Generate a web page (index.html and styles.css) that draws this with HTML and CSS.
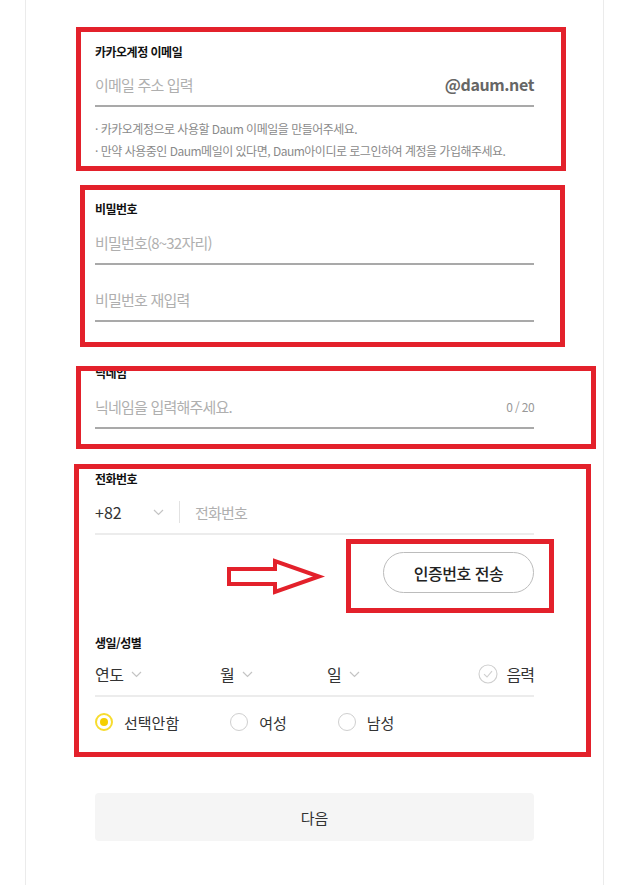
FILE: index.html
```html
<!DOCTYPE html>
<html lang="ko">
<head>
  <meta charset="UTF-8" />
  <meta name="viewport" content="width=device-width, initial-scale=1.0"/>
  <title>카카오계정 가입</title>
  <link rel="stylesheet" href="styles.css">
</head>
<body>

<div class="page">

  <!-- Signup form card -->
  <div class="signup">

    <div class="field">
      <label class="field-label">카카오계정 이메일</label>
      <div class="input-row">
        <input type="text" placeholder="이메일 주소 입력" />
        <span class="domain">@daum.net</span>
      </div>
      <ul class="help">
        <li>카카오계정으로 사용할 Daum 이메일을 만들어주세요.</li>
        <li>만약 사용중인 Daum메일이 있다면, Daum아이디로 로그인하여 계정을 가입해주세요.</li>
      </ul>
    </div>

    <div class="field field-password">
      <label class="field-label">비밀번호</label>
      <div class="input-row">
        <input type="password" placeholder="비밀번호(8~32자리)" />
      </div>
      <div class="input-row input-row-second">
        <input type="password" placeholder="비밀번호 재입력" />
      </div>
    </div>

    <div class="field field-nickname">
      <label class="field-label">닉네임</label>
      <div class="input-row">
        <input type="text" placeholder="닉네임을 입력해주세요." />
        <span class="counter">0 / 20</span>
      </div>
    </div>

    <div class="field field-phone">
      <label class="field-label">전화번호</label>
      <div class="input-row input-row-light">
        <div class="country">
          <span>+82</span>
          <svg class="chevron" width="11" height="7" viewBox="0 0 11 7"><polyline points="1,1 5.5,5.5 10,1" /></svg>
        </div>
        <span class="divider"></span>
        <input type="tel" placeholder="전화번호" />
      </div>
      <div class="send-wrap">
        <button class="send-btn">인증번호 전송</button>
      </div>
    </div>

    <div class="field field-birth">
      <label class="field-label">생일/성별</label>
      <div class="input-row input-row-light birth-row">
        <div class="pick pick-year">연도 <svg class="chevron" width="11" height="7" viewBox="0 0 11 7"><polyline points="1,1 5.5,5.5 10,1" /></svg></div>
        <div class="pick pick-month">월 <svg class="chevron" width="11" height="7" viewBox="0 0 11 7"><polyline points="1,1 5.5,5.5 10,1" /></svg></div>
        <div class="pick pick-day">일 <svg class="chevron" width="11" height="7" viewBox="0 0 11 7"><polyline points="1,1 5.5,5.5 10,1" /></svg></div>
        <div class="lunar">
          <svg class="check" width="20" height="20" viewBox="0 0 20 20">
            <circle cx="10" cy="10" r="9" />
            <polyline points="6,10.2 9,13 14,7.2" />
          </svg>
          <span>음력</span>
        </div>
      </div>
      <div class="gender">
        <label class="radio radio-on"><span class="dot"></span>선택안함</label>
        <label class="radio"><span class="dot"></span>여성</label>
        <label class="radio"><span class="dot"></span>남성</label>
      </div>
    </div>

    <button class="next-btn">다음</button>
  </div>

  <!-- Red annotation marks drawn over the screenshot -->
  <div class="mark mark-email"></div>
  <div class="mark mark-password"></div>
  <div class="mark mark-nickname"></div>
  <div class="mark mark-phone"></div>
  <div class="mark mark-send"></div>
  <svg class="mark-arrow" width="110" height="50" viewBox="0 0 110 50">
    <polygon points="9,17 55,17 55,9 99,24.5 55,40 55,32 9,32" />
  </svg>

</div>

</body>
</html>
```

FILE: styles.css
```css
body {
  margin: 0;
  background: #fff;
  font-family: 'Noto Sans CJK KR', 'Noto Sans', sans-serif;
  color: #222;
}

.page {
  position: relative;
  min-height: 885px;
  overflow: hidden;
}

.signup {
  margin-left: 25px;
  width: 579px;
  min-height: 885px;
  box-sizing: border-box;
  padding: 43px 69px 0;
  border-left: 1px solid #ebebeb;
  border-right: 1px solid #ebebeb;
}

.field-label {
  display: block;
  font-size: 12px;
  line-height: 18px;
  font-weight: bold;
  letter-spacing: -0.5px;
  color: #111;
}

.input-row {
  display: flex;
  align-items: center;
  height: 42px;
  margin-top: 2px;
  border-bottom: 2px solid #a9a9a9;
}

.input-row input {
  flex: 1;
  min-width: 0;
  border: none;
  outline: none;
  padding: 0;
  background: transparent;
  font-family: inherit;
  font-size: 15px;
  letter-spacing: -0.8px;
  color: #333;
}

.input-row input::placeholder {
  color: #afafaf;
}

.domain {
  font-size: 16px;
  font-weight: bold;
  letter-spacing: -0.4px;
  color: #666;
}

.help {
  list-style: none;
  margin: 11px 0 0;
  padding: 0;
  font-size: 12px;
  line-height: 22px;
  letter-spacing: -0.5px;
  color: #8a8a8a;
}

.help li::before {
  content: '· ';
}

.field-password {
  margin-top: 38px;
}

.field-password .input-row {
  margin-top: 3px;
}

.field-password .input-row-second {
  margin-top: 13px;
}

.field-nickname {
  margin-top: 42px;
}

.field-nickname .input-row {
  margin-top: 3px;
}

.counter {
  font-size: 12px;
  letter-spacing: -0.6px;
  color: #999;
}

.field-phone {
  margin-top: 41px;
}

.field-phone .input-row {
  margin-top: 3px;
}

.input-row-light {
  border-bottom-color: #ececec;
}

.country {
  display: flex;
  align-items: center;
  width: 84px;
  font-size: 16px;
  color: #333;
}

.country span {
  width: 58px;
}

.chevron {
  fill: none;
  stroke: #c4c4c4;
  stroke-width: 1.2;
}

.divider {
  width: 1px;
  height: 22px;
  background: #e2e2e2;
  margin-right: 15px;
}

.send-wrap {
  display: flex;
  justify-content: flex-end;
  margin-top: 17px;
}

.send-btn {
  width: 151px;
  height: 41px;
  border: 1px solid #bcbcbc;
  border-radius: 21px;
  background: #fff;
  font-family: inherit;
  font-size: 16px;
  font-weight: 500;
  letter-spacing: -0.5px;
  color: #222;
}

.field-birth {
  margin-top: 41px;
}

.birth-row {
  margin-top: 1px;
}

.pick {
  display: flex;
  align-items: center;
  gap: 8px;
  font-size: 16px;
  letter-spacing: -0.5px;
  color: #333;
}

.pick-year {
  width: 125px;
}

.pick-month {
  width: 107px;
}

.pick-day {
  flex: 1;
}

.lunar {
  display: flex;
  align-items: center;
  gap: 9px;
  font-size: 16px;
  letter-spacing: -1px;
  color: #333;
}

.check circle,
.check polyline {
  fill: none;
  stroke: #cfcfcf;
  stroke-width: 1.1;
}

.gender {
  display: flex;
  align-items: center;
  gap: 51px;
  height: 30px;
  margin-top: 10px;
}

.radio {
  display: flex;
  align-items: center;
  gap: 11px;
  font-size: 15px;
  color: #333;
}

.radio .dot {
  width: 18px;
  height: 18px;
  box-sizing: border-box;
  border: 1px solid #cfcfcf;
  border-radius: 50%;
  display: flex;
  align-items: center;
  justify-content: center;
}

.radio-on .dot {
  border: 2px solid #f7dc2f;
}

.radio-on .dot::after {
  content: '';
  width: 8px;
  height: 8px;
  border-radius: 50%;
  background: #f5cf00;
}

.next-btn {
  display: block;
  width: 100%;
  height: 48px;
  margin-top: 56px;
  border: none;
  border-radius: 4px;
  background: #f5f5f5;
  font-family: inherit;
  font-size: 15px;
  color: #333;
}

/* Annotation overlays */
.mark {
  position: absolute;
  box-sizing: border-box;
  border: 5px solid #e3212b;
  pointer-events: none;
}

.mark-email {
  left: 76px;
  top: 27px;
  width: 490px;
  height: 144px;
}

.mark-password {
  left: 80px;
  top: 185px;
  width: 485px;
  height: 162px;
}

.mark-nickname {
  left: 76px;
  top: 366px;
  width: 520px;
  height: 83px;
}

.mark-phone {
  left: 74px;
  top: 464px;
  width: 517px;
  height: 293px;
}

.mark-send {
  left: 346px;
  top: 539px;
  width: 208px;
  height: 74px;
}

.mark-arrow {
  position: absolute;
  left: 220px;
  top: 552px;
}

.mark-arrow polygon {
  fill: none;
  stroke: #e3212b;
  stroke-width: 4;
}
```
